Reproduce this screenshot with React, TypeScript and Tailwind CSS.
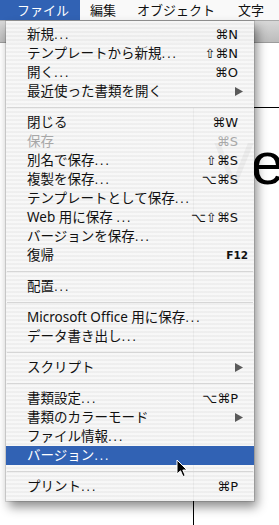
import React from "react";

type Row =
  | { kind: "sep" }
  | {
      kind: "item";
      label: string;
      shortcut?: string;
      sub?: boolean;
      disabled?: boolean;
      active?: boolean;
      fkey?: boolean;
    };

const rows: Row[] = [
  { kind: "item", label: "新規...", shortcut: "⌘N" },
  { kind: "item", label: "テンプレートから新規...", shortcut: "⇧⌘N" },
  { kind: "item", label: "開く...", shortcut: "⌘O" },
  { kind: "item", label: "最近使った書類を開く", sub: true },
  { kind: "sep" },
  { kind: "item", label: "閉じる", shortcut: "⌘W" },
  { kind: "item", label: "保存", shortcut: "⌘S", disabled: true },
  { kind: "item", label: "別名で保存...", shortcut: "⇧⌘S" },
  { kind: "item", label: "複製を保存...", shortcut: "⌥⌘S" },
  { kind: "item", label: "テンプレートとして保存..." },
  { kind: "item", label: "Web 用に保存 ...", shortcut: "⌥⇧⌘S" },
  { kind: "item", label: "バージョンを保存..." },
  { kind: "item", label: "復帰", shortcut: "F12", fkey: true },
  { kind: "sep" },
  { kind: "item", label: "配置..." },
  { kind: "sep" },
  { kind: "item", label: "Microsoft Office 用に保存..." },
  { kind: "item", label: "データ書き出し..." },
  { kind: "sep" },
  { kind: "item", label: "スクリプト", sub: true },
  { kind: "sep" },
  { kind: "item", label: "書類設定...", shortcut: "⌥⌘P" },
  { kind: "item", label: "書類のカラーモード", sub: true },
  { kind: "item", label: "ファイル情報..." },
  { kind: "item", label: "バージョン...", active: true },
  { kind: "sep" },
  { kind: "item", label: "プリント...", shortcut: "⌘P" },
];

function Label({ text }: { text: string }) {
  // the dots are spaced wider than a plain period run
  if (!text.endsWith("...")) return <span>{text}</span>;
  return (
    <span>
      {text.slice(0, -3)}
      <span className="font-['DejaVu_Sans',sans-serif] text-[12px] tracking-[1.5px]">...</span>
    </span>
  );
}

function SubArrow({ color }: { color: string }) {
  return (
    <svg width="8" height="9" viewBox="0 0 8 9" className="block">
      <path d="M0 0 L8 4.5 L0 9 Z" fill={color} />
    </svg>
  );
}

function MenuRow({ row }: { row: Row }) {
  if (row.kind === "sep") {
    return (
      <div className="flex h-[12px] items-center px-px">
        <div className="h-px w-full bg-[#d6d6d6]" />
      </div>
    );
  }
  const text = row.active ? "text-white" : row.disabled ? "text-[#a8a8a8]" : "text-[#111]";
  return (
    <div
      className={`flex h-[19px] items-center justify-between pl-[21px] ${
        row.sub ? "pr-[11px]" : "pr-[16px]"
      } ${row.active ? "bg-[#3162b4]" : ""} ${text}`}
    >
      <Label text={row.label} />
      {row.shortcut && !row.fkey && (
        <span className="font-['DejaVu_Sans',sans-serif] text-[13px]">{row.shortcut}</span>
      )}
      {row.fkey && (
        <span className="mr-[-10px] font-['DejaVu_Sans',sans-serif] text-[10.5px] font-bold">
          {row.shortcut}
        </span>
      )}
      {row.sub && <SubArrow color={row.active ? "#fff" : "#5a5a5a"} />}
    </div>
  );
}

export default function App() {
  return (
    <div className="relative h-[525px] w-[279px] overflow-hidden bg-white font-['Noto_Sans','Noto_Sans_CJK_JP',sans-serif] text-[13.5px]">
      {/* menu bar */}
      <div className="flex h-[21px] items-center border-b border-[#a9a9a9] bg-[#f9f9f9] text-[13px] leading-none text-[#111]">
        <div className="flex h-full w-[80px] items-center bg-[#3162b4] pl-[17px] text-white">ファイル</div>
        <div className="ml-[10px]">編集</div>
        <div className="ml-[21px]">オブジェクト</div>
        <div className="ml-[23px]">文字</div>
      </div>
      {/* toolbar strip behind the menu */}
      <div className="h-[22px] border-b border-[#9c9c9c] bg-[linear-gradient(#d8d8d8,#bcbcbc)]" />

      {/* artboard edge and big text on the canvas */}
      <div className="absolute left-[193px] top-[107px] h-[500px] w-[200px] border-l border-t border-black" />
      <div className="absolute left-[214px] top-[134px] font-['Liberation_Sans',sans-serif] text-[60px] leading-none text-black">
        Ve
      </div>

      {/* dropdown */}
      <div className="absolute left-[6px] top-[21px] w-[248px] bg-[repeating-linear-gradient(rgba(247,247,247,0.96)_0px,rgba(247,247,247,0.96)_2px,rgba(238,238,238,0.96)_2px,rgba(238,238,238,0.96)_4px)] pb-[5px] pt-[4px] shadow-[0_0_0_1px_rgba(0,0,0,0.12),3px_6px_10px_rgba(0,0,0,0.45)]">
        {rows.map((r, i) => (
          <MenuRow key={i} row={r} />
        ))}
      </div>

      {/* mouse pointer */}
      <svg className="absolute left-[176px] top-[459px]" width="13" height="20" viewBox="0 0 13 20">
        <path
          d="M1 1 L1 15 L4.5 11.8 L7 17.5 L9.2 16.6 L6.8 11 L11 11 Z"
          fill="#000"
          stroke="#fff"
          strokeWidth="1"
          strokeLinejoin="round"
        />
      </svg>
    </div>
  );
}
